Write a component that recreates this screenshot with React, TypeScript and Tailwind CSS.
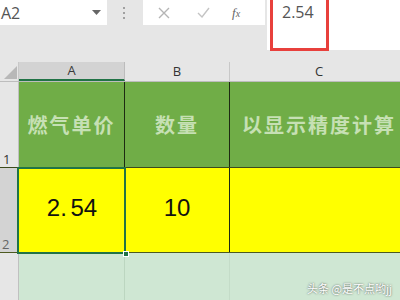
import React from "react";

const cjk = { fontFamily: '"Noto Sans CJK SC", "Noto Sans", sans-serif' };
const sans = { fontFamily: '"Open Sans", "Liberation Sans", sans-serif' };
const arial = { fontFamily: '"Liberation Sans", Arial, sans-serif' };

export default function App() {
  return (
    <div className="w-[400px] h-[300px] bg-[#e6e6e6] overflow-hidden flex flex-col relative" style={sans}>
      {/* formula bar */}
      <div className="h-[62px] flex items-start shrink-0">
        <div className="w-[107px] h-[25px] bg-white flex items-center justify-between pl-[1px] pr-[6px]">
          <span className="text-[16px] text-[#555] leading-none">A2</span>
          <svg width="9" height="6" viewBox="0 0 9 6"><path d="M0 0h9L4.5 5z" fill="#666" /></svg>
        </div>
        <div className="w-[36px] h-[25px] flex items-center justify-center">
          <div className="flex flex-col gap-[3px] ml-[-2px]">
            <div className="w-[2px] h-[2px] bg-[#a0a0a0]" />
            <div className="w-[2px] h-[2px] bg-[#a0a0a0]" />
            <div className="w-[2px] h-[2px] bg-[#a0a0a0]" />
          </div>
        </div>
        <div className="w-[122px] h-[25px] bg-white flex items-center">
          <svg className="ml-[15px]" width="12" height="12" viewBox="0 0 12 12"><path d="M1 1l10 10M11 1L1 11" stroke="#b5b5b5" strokeWidth="1.4" /></svg>
          <svg className="ml-[27px]" width="13" height="11" viewBox="0 0 13 11"><path d="M1 6l4 4 7-9" stroke="#c4c4c4" strokeWidth="1.4" fill="none" /></svg>
          <span className="ml-[22px] text-[13px] italic text-[#666] leading-none" style={{ fontFamily: '"Liberation Serif", serif' }}>f<span className="text-[10px]">x</span></span>
        </div>
        <div className="ml-[2px] flex-1 h-[50px] bg-white relative">
          <div className="absolute left-[3px] top-[-4px] w-[59px] h-[55px] border-[3px] border-[#e8403c]" />
          <span className="absolute left-[15px] top-[3px] text-[16px] text-[#555] leading-[18px]">2.54</span>
        </div>
      </div>

      {/* column headers */}
      <div className="h-[20px] flex shrink-0 border-b border-[#bdbdbd]">
        <div className="w-[19px] h-full flex items-end justify-end pr-[1px] pb-[2px] border-r border-[#c8c8c8]">
          <svg width="13" height="13" viewBox="0 0 13 13"><path d="M13 0v13H0z" fill="#b8b8b8" /></svg>
        </div>
        <div className="w-[106px] h-full bg-[#d3d3d3] border-r border-[#bcbcbc] border-b-2 border-b-[#217346] flex items-center justify-center text-[13px] text-[#3a3a3a]">A</div>
        <div className="w-[105px] h-full border-r border-[#c8c8c8] flex items-center justify-center text-[13px] text-[#333]">B</div>
        <div className="flex-1 h-full flex items-center justify-center text-[13px] text-[#333] pl-[8px]">C</div>
      </div>

      {/* row 1 */}
      <div className="h-[85px] flex shrink-0">
        <div className="w-[19px] h-full bg-[#e6e6e6] border-r border-[#c0c0c0] flex items-end pl-[3px] pb-[1px] text-[13px] text-[#333] leading-none">1</div>
        <div className="w-[106px] h-full bg-[#70ad47] border-r border-[#1d2a12] flex items-center justify-center text-[20px] font-bold text-[#c6e0b4] tracking-[2px]" style={cjk}>燃气单价</div>
        <div className="w-[105px] h-full bg-[#70ad47] border-r border-[#1d2a12] flex items-center justify-center text-[20px] font-bold text-[#c6e0b4] tracking-[2px]" style={cjk}>数量</div>
        <div className="flex-1 h-full bg-[#70ad47] flex items-center pl-[12px] text-[20px] font-bold text-[#c6e0b4] tracking-[2px] whitespace-nowrap overflow-hidden" style={cjk}>以显示精度计算</div>
      </div>

      {/* row 2 */}
      <div className="h-[86px] flex shrink-0 border-t border-[#3c4a1c] border-b border-b-[#4d5a20]">
        <div className="w-[19px] h-full bg-[#d3d3d3] border-r-2 border-[#217346] flex items-end pl-[2px] pb-[1px] text-[13px] text-[#666] leading-none">2</div>
        <div className="w-[106px] h-full bg-[#ffff00] relative flex items-center justify-center text-[24px] text-[#111]" style={arial}>
          <div className="absolute inset-[-1px_-1px_-2px_-2px] border-2 border-[#217346]" />
          <div className="absolute right-[-4px] bottom-[-5px] w-[6px] h-[6px] bg-[#217346] border border-white z-10" />
          <span className="mt-[-4px]">2.<span className="tracking-[-3px]"> </span>54</span>
        </div>
        <div className="w-[105px] h-full bg-[#ffff00] border-r border-[#1d2a12] flex items-center justify-center text-[24px] text-[#111]" style={arial}>
          <span className="mt-[-4px]">10</span>
        </div>
        <div className="flex-1 h-full bg-[#ffff00]" />
      </div>

      {/* row 3 */}
      <div className="flex-1 flex">
        <div className="w-[19px] h-full bg-[#e6e6e6] border-r border-[#c0c0c0]" />
        <div className="w-[106px] h-full bg-[#cfe7d3] border-r border-[#bcd6c0]" />
        <div className="w-[105px] h-full bg-[#cfe7d3] border-r border-[#c4dcc8]" />
        <div className="flex-1 h-full bg-[#cfe7d3]" />
      </div>

      <div className="absolute right-[8px] bottom-[4px] text-[11px] text-white whitespace-nowrap" style={{ ...cjk, textShadow: "0 0 2px rgba(0,0,0,0.7)" }}>头条 @是不点哟jj</div>
    </div>
  );
}
